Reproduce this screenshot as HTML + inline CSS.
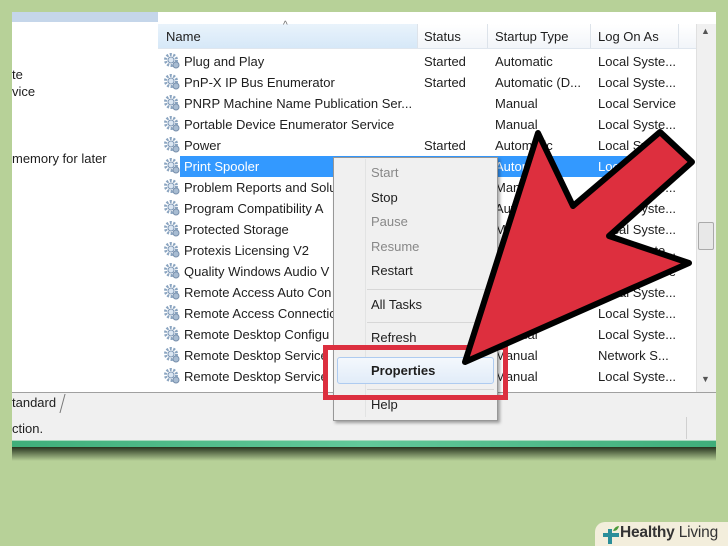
<!DOCTYPE html><html><head><style>
html,body{margin:0;width:728px;height:546px;overflow:hidden}
body{background:#b7d198;position:relative;font-family:"Liberation Sans",sans-serif;font-size:13px;color:#1e1e1e}
.a{position:absolute;white-space:nowrap}
.row{position:absolute;left:0;height:21px;line-height:21px;white-space:nowrap}
.n{position:absolute;left:184px}.s{position:absolute;left:424px}.t{position:absolute;left:495px}.l{position:absolute;left:598px}
.m{position:absolute;left:371px;color:#1e1e1e}.g{color:#888}
</style></head><body>
<div class="a" style="left:12px;top:12px;width:704px;height:428px;background:#fff"></div>
<div class="a" style="left:12px;top:12px;width:146px;height:10px;background:#c5d6ea"></div>
<div class="a" style="left:12px;top:66px;line-height:17px">te<br>vice</div>
<div class="a" style="left:12px;top:151px">memory for later</div>
<div class="a" style="left:158px;top:24px;width:538px;height:24px;background:linear-gradient(#fff,#f2f5f9);border-bottom:1px solid #dfe6ee"></div>
<div class="a" style="left:158px;top:24px;width:259px;height:24px;background:linear-gradient(#e9f3fb,#d6e8f8)"></div>
<div class="a" style="left:417px;top:24px;width:1px;height:24px;background:#dde3ea"></div>
<div class="a" style="left:487px;top:24px;width:1px;height:24px;background:#dde3ea"></div>
<div class="a" style="left:590px;top:24px;width:1px;height:24px;background:#dde3ea"></div>
<div class="a" style="left:678px;top:24px;width:1px;height:24px;background:#dde3ea"></div>
<div class="a" style="left:283px;top:20px;font-size:10px;color:#666">^</div>
<div class="a" style="left:166px;top:29px">Name</div><div class="a" style="left:424px;top:29px">Status</div><div class="a" style="left:495px;top:29px">Startup Type</div><div class="a" style="left:598px;top:29px">Log On As</div>
<div class="a" style="left:696px;top:24px;width:19px;height:368px;background:#f0f0f0;border-left:1px solid #e0e0e0"></div>
<div class="a" style="left:698px;top:222px;width:14px;height:26px;background:#e8e8e8;border:1px solid #aaa;border-radius:2px"></div>
<div class="a" style="left:701px;top:26px;font-size:9px;color:#555">▲</div>
<div class="a" style="left:701px;top:374px;font-size:9px;color:#555">▼</div>
<div class="a" style="left:180px;top:156px;width:500px;height:21px;background:#3399ff"></div>
<div class="a" style="left:0;top:51px;width:700px">
<div class="row" style="top:0"><span class="n">Plug and Play</span><span class="s">Started</span><span class="t">Automatic</span><span class="l">Local Syste...</span></div>
<div class="row" style="top:21px"><span class="n">PnP-X IP Bus Enumerator</span><span class="s">Started</span><span class="t">Automatic (D...</span><span class="l">Local Syste...</span></div>
<div class="row" style="top:42px"><span class="n">PNRP Machine Name Publication Ser...</span><span class="t">Manual</span><span class="l">Local Service</span></div>
<div class="row" style="top:63px"><span class="n">Portable Device Enumerator Service</span><span class="t">Manual</span><span class="l">Local Syste...</span></div>
<div class="row" style="top:84px"><span class="n">Power</span><span class="s">Started</span><span class="t">Automatic</span><span class="l">Local Syste...</span></div>
<div class="row" style="top:105px;color:#fff"><span class="n">Print Spooler</span><span class="t">Automatic</span><span class="l">Local Syste...</span></div>
<div class="row" style="top:126px"><span class="n">Problem Reports and Solu</span><span class="t">Manual</span><span class="l">Local Syste...</span></div>
<div class="row" style="top:147px"><span class="n">Program Compatibility A</span><span class="t">Automatic</span><span class="l">Local Syste...</span></div>
<div class="row" style="top:168px"><span class="n">Protected Storage</span><span class="t">Manual</span><span class="l">Local Syste...</span></div>
<div class="row" style="top:189px"><span class="n">Protexis Licensing V2</span><span class="t">Manual</span><span class="l">Local Syste...</span></div>
<div class="row" style="top:210px"><span class="n">Quality Windows Audio V</span><span class="t">Manual</span><span class="l">Local Service</span></div>
<div class="row" style="top:231px"><span class="n">Remote Access Auto Con</span><span class="t">Manual</span><span class="l">Local Syste...</span></div>
<div class="row" style="top:252px"><span class="n">Remote Access Connectio</span><span class="t">Manual</span><span class="l">Local Syste...</span></div>
<div class="row" style="top:273px"><span class="n">Remote Desktop Configu</span><span class="t">Manual</span><span class="l">Local Syste...</span></div>
<div class="row" style="top:294px"><span class="n">Remote Desktop Service</span><span class="t">Manual</span><span class="l">Network S...</span></div>
<div class="row" style="top:315px"><span class="n">Remote Desktop Service</span><span class="t">Manual</span><span class="l">Local Syste...</span></div>
</div>
<svg class="a" style="left:0;top:0" width="728" height="546">
<defs><g id="gear"><circle r="5.5" fill="none" stroke="#8aa4c0" stroke-width="3" stroke-dasharray="2 1.5"/><circle r="3" fill="#dbe6f2" stroke="#7d97b5"/><circle cx="5" cy="5" r="3" fill="#a8bcd2" stroke="#7890ad"/></g></defs>
<g transform="translate(171,60)"><use href="#gear"/><use href="#gear" y="21"/><use href="#gear" y="42"/><use href="#gear" y="63"/><use href="#gear" y="84"/><use href="#gear" y="105"/><use href="#gear" y="126"/><use href="#gear" y="147"/><use href="#gear" y="168"/><use href="#gear" y="189"/><use href="#gear" y="210"/><use href="#gear" y="231"/><use href="#gear" y="252"/><use href="#gear" y="273"/><use href="#gear" y="294"/><use href="#gear" y="315"/></g>
</svg>
<div class="a" style="left:12px;top:392px;width:704px;height:22px;background:#f0f0f0;border-top:1px solid #a0a0a0;border-bottom:1px solid #a0a0a0"></div>
<div class="a" style="left:12px;top:395px">tandard</div>
<div class="a" style="left:62px;top:394px;width:1px;height:19px;background:#777;transform:skewX(-15deg)"></div>
<div class="a" style="left:12px;top:415px;width:704px;height:25px;background:#f0f0f0"></div>
<div class="a" style="left:686px;top:417px;width:1px;height:22px;background:#d0d0d0"></div>
<div class="a" style="left:12px;top:421px">ction.</div>
<div class="a" style="left:12px;top:440px;width:704px;height:7px;background:linear-gradient(90deg,#3fae7a,#62c89a 50%,#3fae7a);border-top:1px solid #a9d9bf"></div>
<div class="a" style="left:12px;top:447px;width:704px;height:14px;background:linear-gradient(#26331e,#b7d198)"></div>
<div class="a" style="left:333px;top:157px;width:163px;height:262px;background:#f0f0f0;border:1px solid #979797;box-shadow:2px 2px 3px rgba(0,0,0,.35)"></div>
<div class="a" style="left:365px;top:159px;width:1px;height:258px;background:#e2e3e3"></div>
<div class="a" style="left:367px;top:289px;width:127px;height:1px;background:#d7d7d7"></div>
<div class="a" style="left:367px;top:322px;width:127px;height:1px;background:#d7d7d7"></div>
<div class="a" style="left:367px;top:389px;width:127px;height:1px;background:#d7d7d7"></div>
<div class="a" style="left:337px;top:357px;width:155px;height:25px;background:linear-gradient(#f4f8fd,#e1ecf8);border:1px solid #aecbf0;border-radius:3px"></div>
<span class="m g" style="top:165px">Start</span><span class="m" style="top:190px">Stop</span><span class="m g" style="top:214px">Pause</span><span class="m g" style="top:239px">Resume</span><span class="m" style="top:263px">Restart</span><span class="m" style="top:297px">All Tasks</span><span class="m" style="top:330px">Refresh</span><span class="m" style="top:363px;font-weight:bold">Properties</span><span class="m" style="top:397px">Help</span>
<div class="a" style="left:323px;top:345px;width:175px;height:45px;border:5px solid #dc2f3f"></div>
<svg class="a" style="left:0;top:0" width="728" height="546">
<polygon points="465,362 538,133 573,206 660,132 692,162 609,236 689,263" fill="#dd2f3e" stroke="#000" stroke-width="6" stroke-linejoin="round"/>
</svg>
<div class="a" style="left:595px;top:522px;width:133px;height:24px;background:#f3eedc;border-radius:10px 0 0 0"></div>
<svg class="a" style="left:601px;top:525px" width="20" height="20"><path d="M2 10h16M9 4v15" stroke="#2b8e9a" stroke-width="4"/><path d="M12 6q2-5 6-5q-1 5-6 5z" fill="#4c9a3a"/></svg>
<div class="a" style="left:620px;top:524px;font-size:15.5px;color:#333;letter-spacing:-0.2px"><b>Healthy</b> Living</div>
</body></html>
